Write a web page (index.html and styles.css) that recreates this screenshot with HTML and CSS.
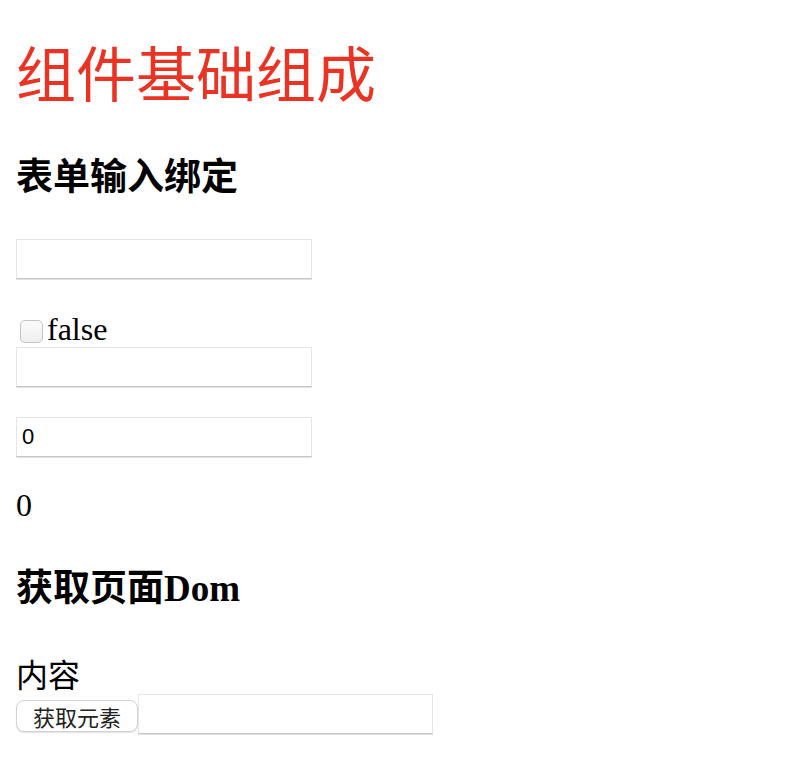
FILE: index.html
```html
<!DOCTYPE html>
<html lang="zh">
<head>
<meta charset="utf-8">
<title>组件基础组成</title>
<link rel="stylesheet" href="styles.css">
</head>
<body>
<div class="page">
  <h1 class="title">组件基础组成</h1>
  <h3 class="section first">表单输入绑定</h3>
  <input class="field f1" type="text">
  <div class="check-row"><input class="check" type="checkbox"><span>false</span></div>
  <input class="field" type="text">
  <input class="field f3" type="text" value="0">
  <p class="value">0</p>
  <h3 class="section second">获取页面Dom</h3>
  <p class="content">内容</p>
  <div class="dom-row">
    <button class="btn" type="button">获取元素</button>
    <input class="field" type="text">
  </div>
</div>
</body>
</html>
```

FILE: styles.css
```css
html, body {
  margin: 0;
  padding: 0;
  background: #fff;
}
.page {
  padding: 16px;
  font-family: "Liberation Serif", "Noto Sans CJK SC", serif;
  font-size: 32px;
  color: #000;
}
.title {
  margin: 25px 0 0;
  font-size: 60px;
  line-height: 72px;
  font-weight: normal;
  color: #ea3323;
}
.section {
  margin: 0;
  font-size: 37px;
  line-height: 44px;
  font-weight: bold;
}
.section.first { margin-top: 43px; }
.section.second { margin-top: 44px; }
.field {
  display: block;
  box-sizing: border-box;
  width: 296px;
  height: 40px;
  margin: 0;
  padding: 0 5px;
  border: 1px solid #e6e6e6;
  border-bottom-color: #c6c6c6;
  box-shadow: 0 1px 0 #e2e2e2;
  background: #fff;
  font-family: "Liberation Sans", "Noto Sans CJK SC", sans-serif;
  font-size: 22px;
  color: #000;
  outline: none;
}
.f1 { margin-top: 39px; }
.f3 { margin-top: 30px; }
.check-row {
  display: flex;
  align-items: center;
  margin-top: 32px;
  height: 36px;
  line-height: 36px;
}
.check {
  appearance: none;
  -webkit-appearance: none;
  box-sizing: border-box;
  width: 23px;
  height: 23px;
  margin: 4px 4px 0 4px;
  border: 1px solid #c4c4c4;
  border-radius: 5px;
  background: linear-gradient(#fafafa, #efefef);
}
.value {
  margin: 30px 0 0;
  line-height: 36px;
}
.content {
  margin: 47px 0 0;
  line-height: 36px;
}
.dom-row {
  display: flex;
  align-items: flex-start;
}
.dom-row .field {
  width: 295px;
}
.btn {
  box-sizing: border-box;
  width: 122px;
  height: 32px;
  margin: 6px 0 0;
  padding: 0;
  border: 1px solid #d2d2d2;
  border-radius: 8px;
  background: #fff;
  box-shadow: 0 1px 1px rgba(0,0,0,0.12);
  font-family: "Noto Sans CJK SC", sans-serif;
  font-size: 22px;
  line-height: 30px;
  color: #222;
}
```
